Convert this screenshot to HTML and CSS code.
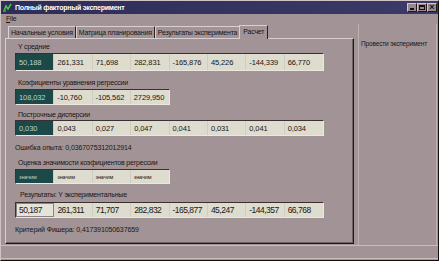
FILE: index.html
```html
<!DOCTYPE html>
<html lang="ru">
<head>
<meta charset="utf-8">
<title>Полный факторный эксперимент</title>
<link rel="stylesheet" href="styles.css">
</head>
<body>
<div class="window">
  <div class="titlebar">
    <svg class="appicon" width="9" height="9" viewBox="0 0 9 9"><path d="M1 8 L3 3 L5 6 L8 1" stroke="#4cc04c" stroke-width="1.6" fill="none"/><rect x="0" y="7" width="3" height="2" fill="#2e9e3e"/></svg>
    <span class="title">Полный факторный эксперимент</span>
    <div class="wbtns">
      <div class="wbtn"><span class="g-min"></span></div>
      <div class="wbtn"><span class="g-max"></span></div>
      <div class="wbtn g-close">×</div>
    </div>
  </div>
  <div class="menubar"><span class="menu"><u>F</u>ile</span></div>
  <div class="content">
    <div class="pagecontrol">
      <div class="tabs">
        <div class="tab">Начальные условия</div>
        <div class="tab">Матрица планирования</div>
        <div class="tab">Результаты эксперимента</div>
        <div class="tab active">Расчет</div>
      </div>
      <div class="sheet">
        <div class="lbl l1">Y средние</div>
        <div class="grid g8 h17">
          <div class="cell sel">50,188</div><div class="cell">261,331</div><div class="cell">71,698</div><div class="cell">282,831</div><div class="cell">-165,876</div><div class="cell">45,226</div><div class="cell">-144,339</div><div class="cell">66,770</div>
        </div>
        <div class="lbl l2">Коэфициенты уравнения регрессии</div>
        <div class="grid g4 h16">
          <div class="cell sel">108,032</div><div class="cell">-10,760</div><div class="cell">-105,562</div><div class="cell">2729,950</div>
        </div>
        <div class="lbl l3">Построчные дисперсии</div>
        <div class="grid g8 h16">
          <div class="cell sel">0,030</div><div class="cell">0,043</div><div class="cell">0,027</div><div class="cell">0,047</div><div class="cell">0,041</div><div class="cell">0,031</div><div class="cell">0,041</div><div class="cell">0,034</div>
        </div>
        <div class="txt err">Ошибка опыта: 0,0367075312012914</div>
        <div class="lbl l4">Оценка значимости коэфициентов регрессии</div>
        <div class="grid g4 h15 small">
          <div class="cell sel">значим</div><div class="cell">значим</div><div class="cell">значим</div><div class="cell">значим</div>
        </div>
        <div class="lbl l5">Результаты: Y экспериментальные</div>
        <div class="grid g8 h16 big">
          <div class="cell focus">50,187</div><div class="cell">261,311</div><div class="cell">71,707</div><div class="cell">282,832</div><div class="cell">-165,877</div><div class="cell">45,247</div><div class="cell">-144,357</div><div class="cell">66,768</div>
        </div>
        <div class="txt fish">Критерий Фишера: 0,417391050637659</div>
      </div>
    </div>
    <div class="side">
      <div class="sidebtn">Провести эксперимент</div>
    </div>
  </div>
  <div class="status"></div>
</div>
</body>
</html>
```
FILE: styles.css
```css
* { box-sizing: border-box; }
html, body { margin: 0; padding: 0; }
body {
  width: 439px;
  height: 261px;
  background: #a29496;
  font-family: "Liberation Sans", Arial, sans-serif;
  font-size: 7px;
  letter-spacing: -0.2px;
  color: #1a1414;
  overflow: hidden;
}
.window {
  width: 439px;
  height: 261px;
  background: #a29496;
  border: 1px solid;
  border-color: #cfc5c5 #151010 #151010 #cfc5c5;
  display: flex;
  flex-direction: column;
}
.titlebar {
  height: 13px;
  flex: none;
  background: linear-gradient(90deg, #2e2d58 0%, #3b3a68 100%);
  display: flex;
  align-items: center;
  padding-left: 2px;
  color: #fff;
}
.appicon { flex: none; }
.title {
  margin-left: 3px;
  font-weight: bold;
  font-size: 7px;
  letter-spacing: -0.25px;
}
.wbtns {
  margin-left: auto;
  display: flex;
  gap: 0;
  margin-right: 1px;
}
.wbtn {
  width: 10px;
  height: 9px;
  background: #988a8c;
  border: 1px solid;
  border-color: #d0c6c6 #201818 #201818 #d0c6c6;
  position: relative;
  color: #111;
  font-size: 9px;
  line-height: 6px;
  text-align: center;
  font-weight: bold;
  letter-spacing: 0;
}
.g-min {
  position: absolute;
  left: 2px;
  bottom: 1px;
  width: 4px;
  height: 2px;
  background: #111;
}
.g-max {
  position: absolute;
  left: 1px;
  top: 1px;
  width: 6px;
  height: 5px;
  border: 1px solid #111;
  border-top-width: 2px;
}
.menubar {
  height: 10px;
  flex: none;
  padding-left: 5px;
  line-height: 10px;
}
.menu u { text-decoration: underline; }
.content {
  flex: 1;
  display: flex;
  min-height: 0;
}
.pagecontrol {
  margin-left: 4px;
  width: 349px;
  display: flex;
  flex-direction: column;
}
.tabs {
  height: 14px;
  display: flex;
  align-items: flex-end;
  padding-left: 3px;
}
.tab {
  height: 12px;
  line-height: 11px;
  padding: 0 2px;
  border: 1px solid;
  border-bottom: none;
  border-color: #d8d0d0 #2a2222 transparent #d8d0d0;
  white-space: nowrap;
}
.tab.active {
  height: 14px;
  line-height: 12px;
  padding: 0 3px;
  margin-left: -1px;
  margin-bottom: -1px;
  position: relative;
  background: #a29496;
  z-index: 1;
}
.sheet {
  height: 206px;
  border: 1px solid;
  border-color: #d8d0d0 #1e1818 #1e1818 #d8d0d0;
  box-shadow: inset -1px -1px 0 #6e6264;
  display: flex;
  flex-direction: column;
  padding-left: 9px;
}
.lbl, .txt {
  height: 10px;
  line-height: 10px;
  white-space: nowrap;
}
.lbl { padding-left: 3px; }
.txt { letter-spacing: -0.1px; }
.l1 { margin-top: 3px; }
.l2 { margin-top: 7px; }
.l3 { margin-top: 5px; }
.err { margin-top: 7px; }
.l4 { margin-top: 5px; }
.l5 { margin-top: 6px; padding-left: 5px; }
.fish { margin-top: 7px; }
.grid {
  display: grid;
  border: 1px solid;
  border-color: #3a3030 #ece8e0 #ece8e0 #3a3030;
  background: #dedcce;
  margin-top: 1px;
}
.g8 { width: 309px; grid-template-columns: repeat(8, 1fr); }
.g4 { width: 155px; grid-template-columns: repeat(4, 1fr); }
.h17 { height: 18px; }
.h16 { height: 16px; }
.h15 { height: 15px; }
.l3 + .grid { margin-top: 0; }
.l5 + .grid { margin-top: 2px; }
.cell {
  border-right: 1px solid #cfcdbf;
  padding-left: 3px;
  display: flex;
  align-items: center;
  white-space: nowrap;
  overflow: hidden;
  font-size: 7.5px;
  letter-spacing: -0.1px;
}
.cell:last-child { border-right: none; }
.cell.sel {
  background: #1c4848;
  color: #b8d4cc;
}
.small .cell { font-size: 5.5px; letter-spacing: -0.1px; }
.big .cell { font-size: 8.5px; letter-spacing: -0.5px; }
.cell.focus {
  outline: 1px solid #8c8282;
  outline-offset: -1px;
  background: #e6e4da;
}
.side {
  margin-left: 4px;
  flex: 1;
  margin-right: 1px;
  border-left: 1px solid #bcb0b2;
  border-right: 1px solid #bcb0b2;
  padding-top: 16px;
  padding-left: 2px;
}
.sidebtn {
  white-space: nowrap;
  font-size: 6.5px;
  letter-spacing: -0.15px;
}
.status {
  height: 14px;
  flex: none;
  border-top: 1px solid #c8bebe;
  border-bottom: 1px solid #c8bebe;
  margin-bottom: 1px;
}
```
